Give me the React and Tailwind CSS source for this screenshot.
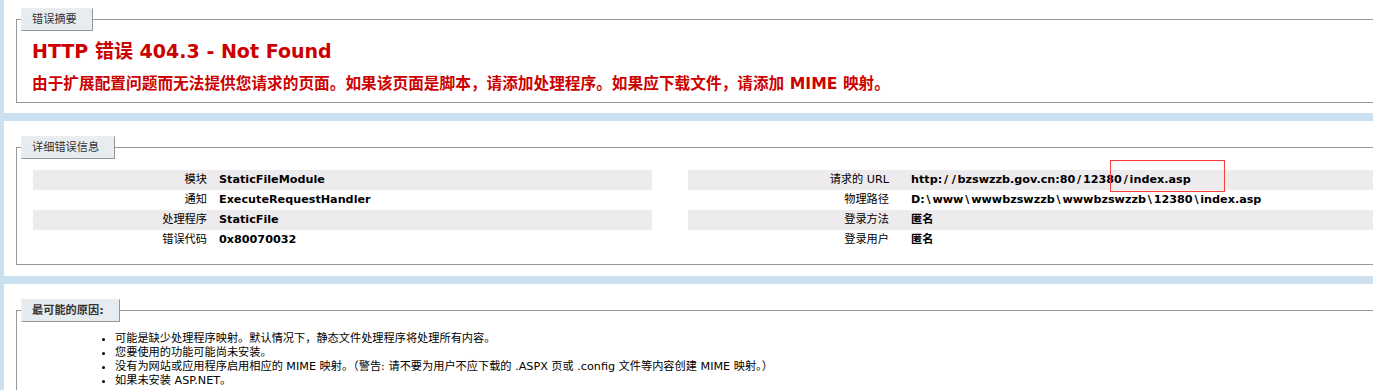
const font = "font-['DejaVu_Sans','Noto_Sans_CJK_SC',sans-serif]";

const leftRows = [
  ['模块', 'StaticFileModule'],
  ['通知', 'ExecuteRequestHandler'],
  ['处理程序', 'StaticFile'],
  ['错误代码', '0x80070032'],
];

const rightRows = [
  ['请求的 URL', 'http://bzswzzb.gov.cn:80/12380/index.asp'],
  ['物理路径', 'D:\\www\\wwwbzswzzb\\wwwbzswzzb\\12380\\index.asp'],
  ['登录方法', '匿名'],
  ['登录用户', '匿名'],
];

const causes = [
  '可能是缺少处理程序映射。默认情况下，静态文件处理程序将处理所有内容。',
  '您要使用的功能可能尚未安装。',
  '没有为网站或应用程序启用相应的 MIME 映射。（警告: 请不要为用户不应下载的 .ASPX 页或 .config 文件等内容创建 MIME 映射。）',
  '如果未安装 ASP.NET。',
];

function Legend({ children, bold }) {
  return (
    <legend
      className={`ml-[-11px] border border-t-[#ededed] border-l-[#ededed] border-r-[#969696] border-b-[#969696] bg-[#e7ecf0] pt-[4px] pb-[4px] pl-[10px] pr-[15px] text-[11.2px] leading-[13px] text-[#333] ${bold ? 'font-bold' : ''}`}
    >
      {children}
    </legend>
  );
}

// Verdana's slashes are much wider than DejaVu's, so give them room
function Value({ text }) {
  return text.split(/([\\/])/).map((part, i) =>
    part === '/' || part === '\\' ? (
      <span key={i} className="inline-block w-[7.7px] text-center">
        {part}
      </span>
    ) : (
      <span key={i}>{part}</span>
    )
  );
}

function DetailTable({ rows, width, labelWidth, labelPad, className }) {
  return (
    <div className={className} style={{ width }}>
      {rows.map(([label, value], i) => (
        <div
          key={label}
          className={`flex h-[20px] text-[11.2px] leading-[20px] text-black ${i % 2 === 0 ? 'bg-[#eeebee]' : ''}`}
        >
          <div className="shrink-0 text-right" style={{ width: labelWidth, paddingRight: labelPad }}>
            {label}
          </div>
          <div className="whitespace-nowrap font-bold">
            <Value text={value} />
          </div>
        </div>
      ))}
    </div>
  );
}

export default function App() {
  return (
    <div className={`relative h-[390px] w-full overflow-hidden bg-[#cbe1ef] ${font}`}>
      <div className="flex flex-col gap-[8px]">
        <section className="ml-[4px] w-[1900px] bg-white px-[12px] pt-[8px] pb-[10px]">
          <fieldset className="border border-[#999] px-[15px] pb-[9px]">
            <Legend>错误摘要</Legend>
            <h2 className="mt-[9px] text-[19.04px] font-bold leading-[22px] text-[#cc0000]">
              HTTP 错误 404.3 - Not Found
            </h2>
            <h3 className="mt-[13px] text-[15.68px] font-bold leading-[18px] text-[#cc0000]">
              由于扩展配置问题而无法提供您请求的页面。如果该页面是脚本，请添加处理程序。如果应下载文件，请添加 MIME 映射。
            </h3>
          </fieldset>
        </section>

        <section className="ml-[4px] w-[1900px] bg-white px-[12px] pt-[15px] pb-[11px]">
          <fieldset className="border border-[#999] px-[15px] pb-[14px]">
            <Legend>详细错误信息</Legend>
            <div className="mt-[11px] flex items-start">
              <DetailTable rows={leftRows} width={619} labelWidth={186} labelPad={12} className="ml-[1px]" />
              <DetailTable rows={rightRows} width={1114} labelWidth={223} labelPad={22} className="ml-[36px]" />
            </div>
          </fieldset>
        </section>

        <section className="ml-[4px] w-[1900px] bg-white px-[12px] pt-[15px] pb-[10px]">
          <fieldset className="border border-[#999] px-[15px] pb-[10px]">
            <Legend bold>最可能的原因:</Legend>
            <ul className="mt-[10px] list-disc pl-[83px] text-[11.2px] leading-[14px] text-black">
              {causes.map((c) => (
                <li key={c}>{c}</li>
              ))}
            </ul>
          </fieldset>
        </section>
      </div>

      <div className="absolute left-[1110px] top-[160px] h-[32px] w-[115px] border border-[#ff3b3b]" />
    </div>
  );
}
